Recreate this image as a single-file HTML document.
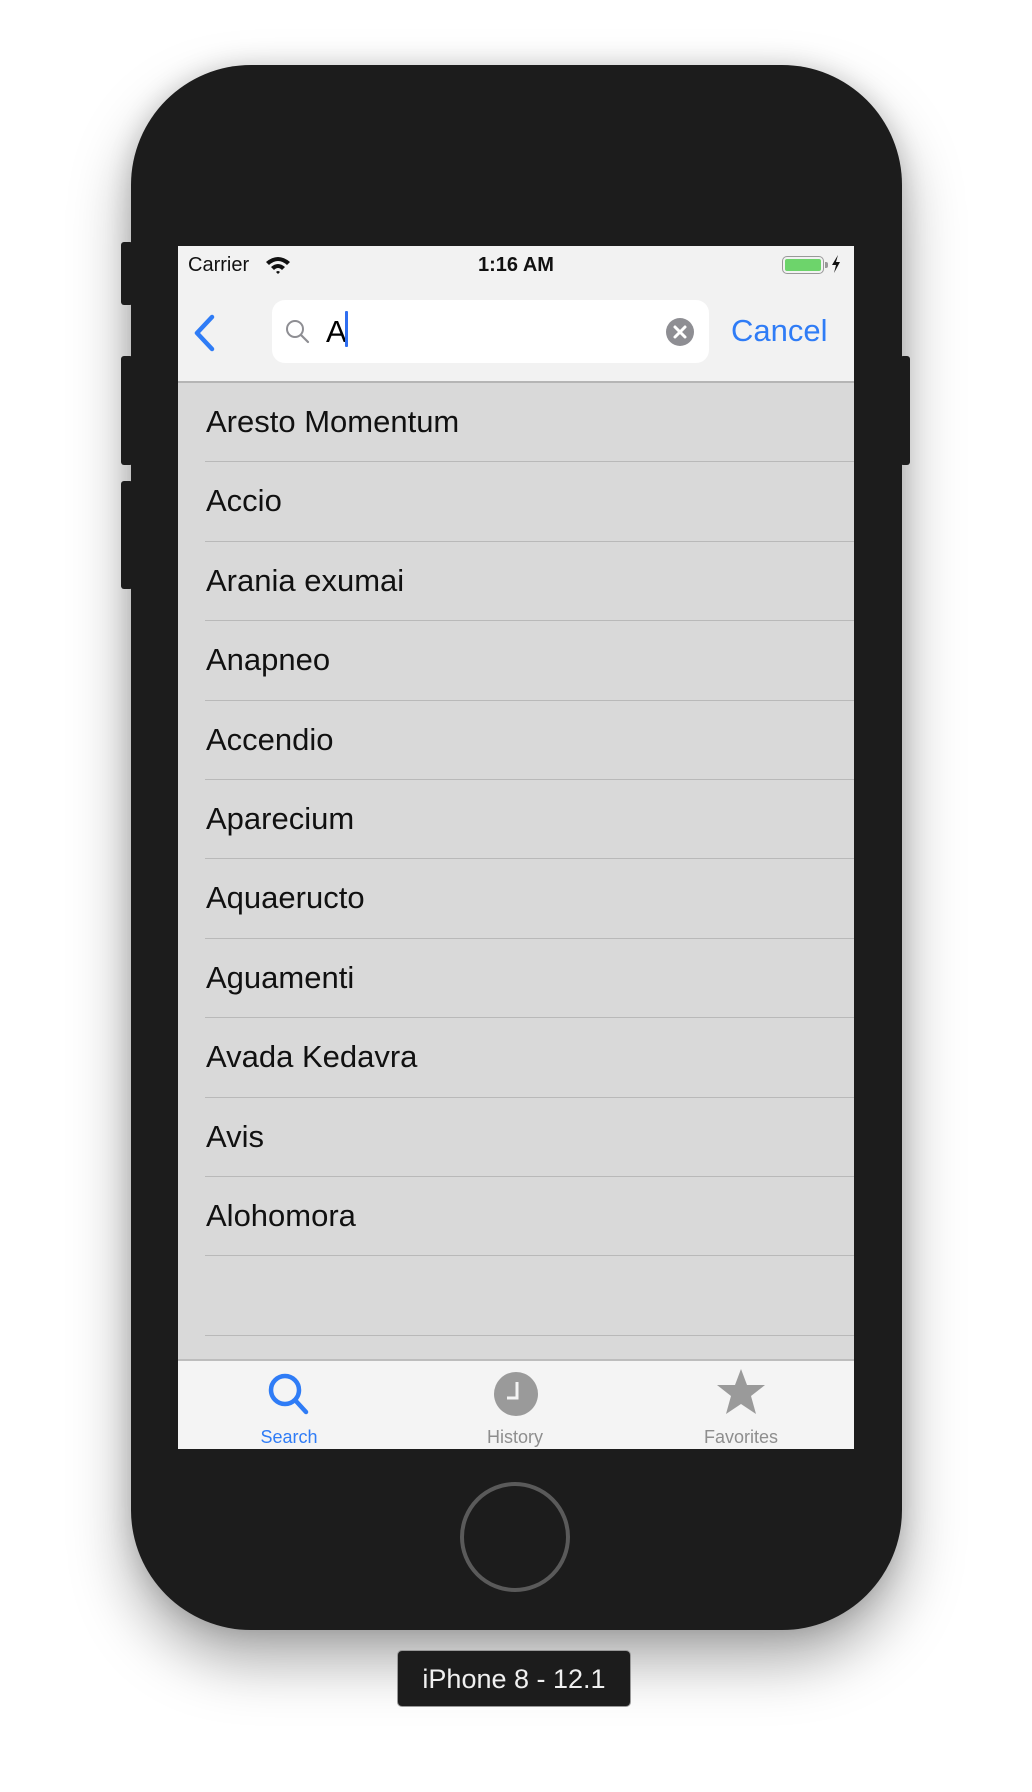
<!DOCTYPE html>
<html><head><meta charset="utf-8"><style>
*{margin:0;padding:0;box-sizing:border-box}
body{width:1032px;height:1792px;background:#fff;position:relative;overflow:hidden;font-family:"Liberation Sans",sans-serif}
.abs{position:absolute}
.phone{left:131px;top:65px;width:771px;height:1565px;background:#1c1c1c;border-radius:120px;box-shadow:0 30px 60px rgba(0,0,0,.35),0 0 25px rgba(0,0,0,.15)}
.btn{background:#1c1c1c;border-radius:3px}
.screen{left:178px;top:246px;width:676px;height:1203px;background:#d9d9d9;overflow:hidden}
.nav{left:0;top:0;width:676px;height:137px;background:#f2f2f2;border-bottom:2px solid #b5b5b5}
.row{position:absolute;left:0;width:676px;height:79.4px}
.row span{position:absolute;left:28px;top:21px;font-size:31px;color:#111}
.row i{position:absolute;left:27px;right:0;bottom:0;height:1px;background:#b9b9b9}
.tab{left:0;top:1113px;width:676px;height:90px;background:#f4f4f4;border-top:2px solid #bdbdbd}
.tl{position:absolute;top:66px;font-size:18px;width:120px;text-align:center}
</style></head><body>
<div class="abs phone"></div>
<div class="abs btn" style="left:121px;top:242px;width:12px;height:63px"></div>
<div class="abs btn" style="left:121px;top:356px;width:12px;height:109px"></div>
<div class="abs btn" style="left:121px;top:481px;width:12px;height:108px"></div>
<div class="abs btn" style="left:900px;top:356px;width:10px;height:109px"></div>
<div class="abs" style="left:460px;top:1482px;width:110px;height:110px;border:4px solid #5a5a5a;border-radius:50%"></div>
<div class="abs" style="left:397px;top:1650px;width:234px;height:57px;background:#1c1c1c;border:1px solid #999;border-radius:5px;color:#f0f0f0;font-size:27px;text-align:center;line-height:57px">iPhone 8 - 12.1</div>

<div class="abs screen">
 <div class="abs nav">
  <div class="abs" style="left:10px;top:8px;font-size:20px;color:#111">Carrier</div>
  <svg class="abs" style="left:87px;top:9px" width="26" height="20" viewBox="0 0 26 20"><path d="M1 7 Q13 -3 25 7 L22 10 Q13 2 4 10Z M6 12 Q13 6 20 12 L17 15 Q13 11 9 15Z M11 17 Q13 15 15 17 L13 19Z" fill="#111"/></svg>
  <div class="abs" style="left:0;width:676px;text-align:center;top:8px;font-size:20px;font-weight:bold;color:#111">1:16 AM</div>
  <div class="abs" style="left:604px;top:10px;width:42px;height:18px;border:1.5px solid #999;border-radius:5px;padding:2px"><div style="width:100%;height:100%;background:#6dd46b;border-radius:2px"></div></div>
  <div class="abs" style="left:647px;top:16px;width:3px;height:6px;background:#999;border-radius:0 2px 2px 0"></div>
  <svg class="abs" style="left:653px;top:9px" width="10" height="18" viewBox="0 0 10 18"><path d="M7 0 L1 10 H5 L3 18 L9 7 H5Z" fill="#111"/></svg>
  <svg class="abs" style="left:14px;top:68px" width="26" height="38" viewBox="0 0 26 38"><path d="M20 3 L5 19 L20 35" stroke="#2f7cf6" stroke-width="4.5" fill="none" stroke-linecap="round" stroke-linejoin="round"/></svg>
  <div class="abs" style="left:94px;top:54px;width:437px;height:63px;background:#fff;border-radius:13px">
   <svg class="abs" style="left:12px;top:18px" width="28" height="28" viewBox="0 0 28 28"><circle cx="11" cy="11" r="8" stroke="#8e8e93" stroke-width="2" fill="none"/><path d="M17 17 L24 24" stroke="#8e8e93" stroke-width="2.2" stroke-linecap="round"/></svg>
   <div class="abs" style="left:54px;top:14px;font-size:31px;color:#000">A</div>
   <div class="abs" style="left:73px;top:11px;width:3px;height:36px;background:#2f6ef0;border-radius:1px"></div>
   <svg class="abs" style="left:393px;top:17px" width="30" height="30" viewBox="0 0 30 30"><circle cx="15" cy="15" r="14" fill="#8e8e93"/><path d="M10 10 L20 20 M20 10 L10 20" stroke="#fff" stroke-width="3" stroke-linecap="round"/></svg>
  </div>
  <div class="abs" style="left:553px;top:67px;font-size:31px;color:#2f7cf6">Cancel</div>
 </div>
 <div class="abs" style="left:0;top:137px;width:676px">
  <div class="row" style="top:0"><span>Aresto Momentum</span><i></i></div>
  <div class="row" style="top:79.4px"><span>Accio</span><i></i></div>
  <div class="row" style="top:158.8px"><span>Arania exumai</span><i></i></div>
  <div class="row" style="top:238.2px"><span>Anapneo</span><i></i></div>
  <div class="row" style="top:317.6px"><span>Accendio</span><i></i></div>
  <div class="row" style="top:397px"><span>Aparecium</span><i></i></div>
  <div class="row" style="top:476.4px"><span>Aquaeructo</span><i></i></div>
  <div class="row" style="top:555.8px"><span>Aguamenti</span><i></i></div>
  <div class="row" style="top:635.2px"><span>Avada Kedavra</span><i></i></div>
  <div class="row" style="top:714.6px"><span>Avis</span><i></i></div>
  <div class="row" style="top:794px"><span>Alohomora</span><i></i></div>
  <div class="row" style="top:873.4px"><i></i></div>
 </div>
 <div class="abs tab">
  <svg class="abs" style="left:88px;top:10px" width="46" height="46" viewBox="0 0 46 46"><circle cx="19" cy="19" r="14" stroke="#2f7cf6" stroke-width="4.5" fill="none"/><path d="M29 29 L40 41" stroke="#2f7cf6" stroke-width="4.5" stroke-linecap="round"/></svg>
  <div class="tl" style="left:51px;color:#2f7cf6">Search</div>
  <svg class="abs" style="left:315px;top:10px" width="46" height="46" viewBox="0 0 46 46"><circle cx="23" cy="23" r="22" fill="#9a9a9a"/><path d="M24 11 V27 H14" stroke="#f4f4f4" stroke-width="3" fill="none"/></svg>
  <div class="tl" style="left:277px;color:#8e8e8e">History</div>
  <svg class="abs" style="left:538px;top:6px" width="50" height="50" viewBox="0 0 50 50"><path d="M25 2 L31 18 L49 18 L35 29 L40 47 L25 37 L10 47 L15 29 L1 18 L19 18Z" fill="#9a9a9a"/></svg>
  <div class="tl" style="left:503px;color:#8e8e8e">Favorites</div>
 </div>
</div>
</body></html>
